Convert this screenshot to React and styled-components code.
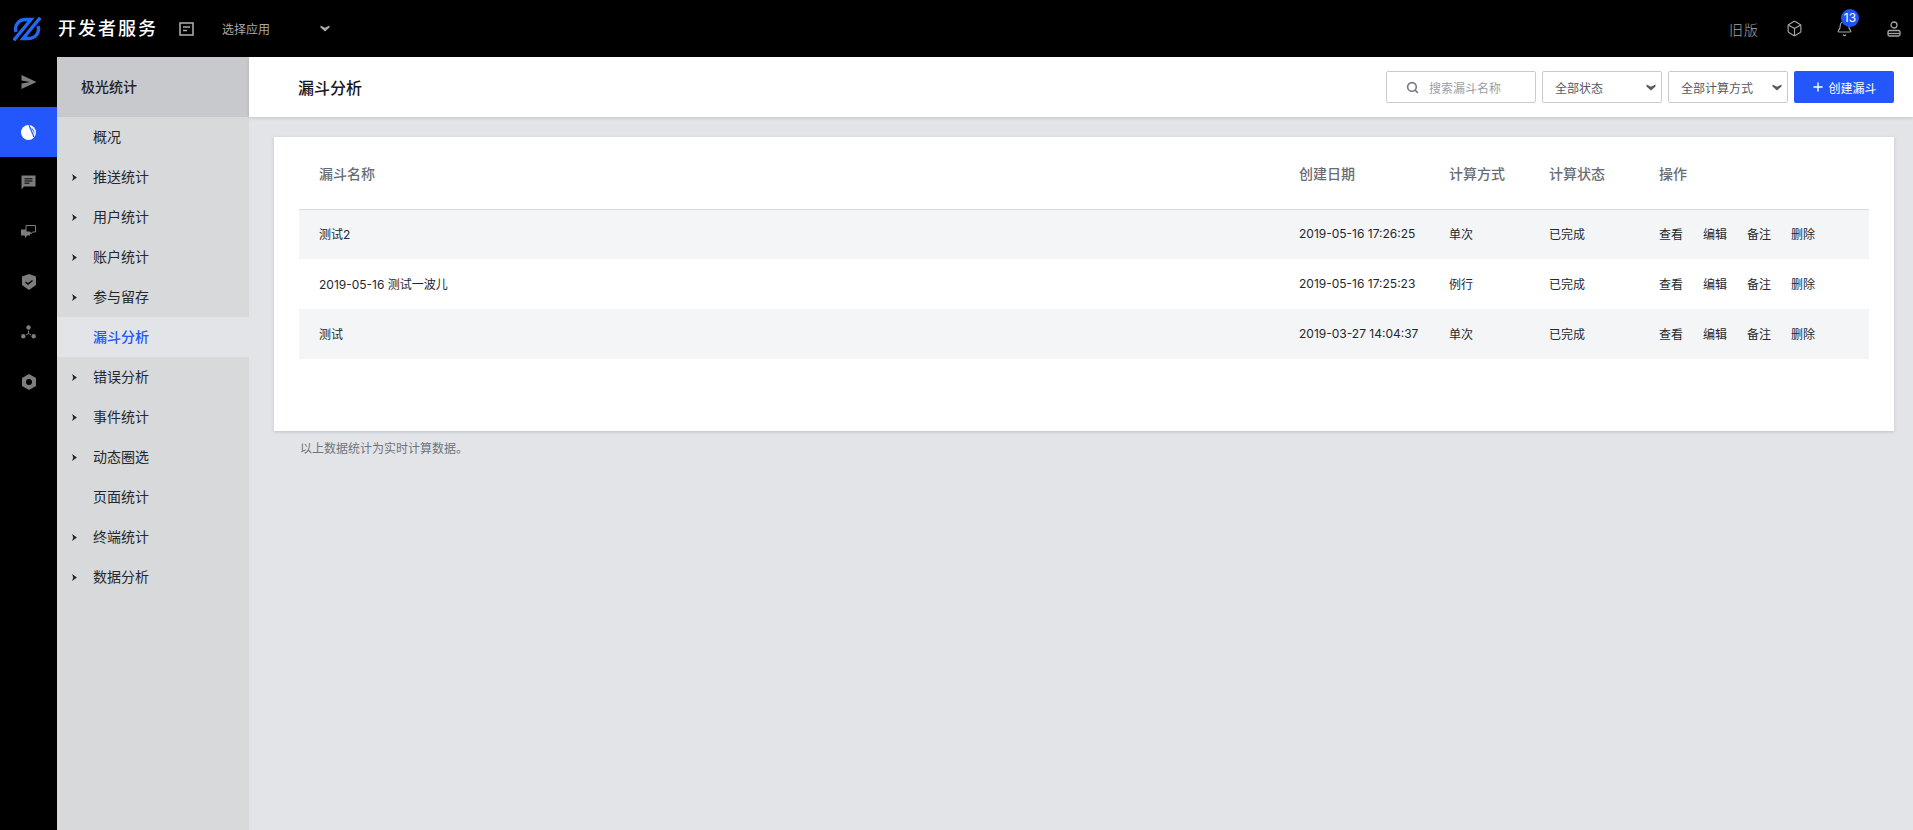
import React from "react";
import styled, { createGlobalStyle } from "styled-components";
import { Box, Bell, Search, Plus } from "lucide-react";

const GlobalStyle = createGlobalStyle`
  html, body {
    margin: 0;
    padding: 0;
    background: #e2e4e8;
    font-family: Inter, "Noto Sans CJK SC", sans-serif;
    -webkit-font-smoothing: antialiased;
  }
  * {
    box-sizing: border-box;
  }
`;

const Page = styled.div`
  display: flex;
  flex-direction: column;
  height: 830px;
  overflow: hidden;
`;

const TopBar = styled.header`
  display: flex;
  align-items: center;
  flex: 0 0 57px;
  background: #000;
  color: #fff;
`;

const LogoCell = styled.div`
  display: flex;
  align-items: center;
  width: 58px;
  padding-left: 13px;
`;

const Brand = styled.div`
  width: 121px;
  font-size: 18px;
  font-weight: 500;
  letter-spacing: 2px;
  line-height: 24px;
`;

const AppPicker = styled.div`
  display: flex;
  align-items: center;
  color: #a9a9a9;
  font-size: 12px;
  svg {
    display: block;
  }
`;

const AppName = styled.span`
  width: 98px;
  margin-left: 28px;
`;

const TopActions = styled.div`
  display: flex;
  align-items: center;
  margin-left: auto;
  padding-right: 10px;
  color: #a5a5a5;
`;

const OldVersion = styled.span`
  margin-right: 26px;
  font-size: 14px;
  font-weight: 300;
  letter-spacing: 1px;
`;

const TopIcon = styled.span`
  position: relative;
  display: flex;
  justify-content: center;
  width: 18px;
  margin-right: ${(props) => props.$gap || 0}px;
`;

const Badge = styled.span`
  position: absolute;
  top: -11px;
  left: 6px;
  width: 18px;
  height: 18px;
  border-radius: 50%;
  background: #2152f5;
  color: #fff;
  font-size: 12px;
  line-height: 18px;
  text-align: center;
`;

const Body = styled.div`
  display: flex;
  flex: 1;
  min-height: 0;
`;

const Rail = styled.nav`
  flex: 0 0 57px;
  background: #000;
`;

const RailItem = styled.div`
  display: flex;
  align-items: center;
  justify-content: center;
  height: 50px;
  background: ${(props) => (props.$active ? "#2457fb" : "transparent")};
  color: ${(props) => (props.$active ? "#fff" : "#7d7d7d")};
`;

const Sidebar = styled.aside`
  flex: 0 0 192px;
  background: #d8d9db;
`;

const SidebarTitle = styled.div`
  height: 60px;
  padding-left: 24px;
  background: #c8c9cc;
  color: #1e2229;
  font-size: 14px;
  font-weight: 500;
  line-height: 60px;
`;

const MenuItem = styled.div`
  display: flex;
  align-items: center;
  height: 40px;
  padding-bottom: 3px;
  background: ${(props) => (props.$active ? "#e2e4e8" : "transparent")};
  color: ${(props) => (props.$active ? "#2457fb" : "#24282e")};
  font-size: 14px;
  font-weight: ${(props) => (props.$active ? 500 : 400)};
`;

const CaretSlot = styled.span`
  display: flex;
  justify-content: flex-end;
  width: 36px;
  margin-top: 3px;
  padding-right: 16px;
`;

const Main = styled.main`
  flex: 1;
  min-width: 0;
`;

const PageHeader = styled.div`
  display: flex;
  align-items: center;
  height: 60px;
  padding: 0 19px 0 49px;
  background: #fff;
  box-shadow: 0 1px 3px rgba(30, 35, 45, 0.16);
`;

const PageTitle = styled.h1`
  margin: 0 auto 0 0;
  color: #14171c;
  font-size: 16px;
  font-weight: 500;
`;

const SearchBox = styled.div`
  display: flex;
  align-items: center;
  width: 150px;
  height: 32px;
  padding-left: 19px;
  border: 1px solid #c8ccd2;
  border-radius: 2px;
  color: #777c84;
  font-size: 12px;
`;

const Placeholder = styled.span`
  margin-left: 10px;
  color: #9a9ea6;
`;

const SelectBox = styled.div`
  display: flex;
  align-items: center;
  justify-content: space-between;
  width: ${(props) => props.$width}px;
  height: 32px;
  margin-left: ${(props) => props.$gap}px;
  padding: 0 5px 0 12px;
  border: 1px solid #c8ccd2;
  border-radius: 2px;
  color: #555a61;
  font-size: 12px;
`;

const CreateButton = styled.button`
  display: flex;
  align-items: center;
  justify-content: center;
  gap: 3px;
  width: 100px;
  height: 32px;
  margin-left: 6px;
  border: 0;
  border-radius: 2px;
  background: #2457fb;
  color: #fff;
  font-family: inherit;
  font-size: 12px;
`;

const Content = styled.div`
  padding: 20px 19px 0 25px;
`;

const Card = styled.section`
  height: 294px;
  padding: 0 25px;
  background: #fff;
  box-shadow: 0 1px 3px rgba(30, 35, 45, 0.18);
`;

const Row = styled.div`
  position: relative;
  z-index: ${(props) => (props.$head ? 1 : 0)};
  display: grid;
  grid-template-columns: 980px 150px 100px 110px 1fr;
  align-items: center;
  height: ${(props) => (props.$head ? "72px" : "50px")};
  padding-bottom: 1px;
  box-shadow: ${(props) => (props.$head ? "0 1px 0 #d8dade" : "none")};
  background: ${(props) => (props.$striped ? "#f4f5f7" : "transparent")};
  color: ${(props) => (props.$head ? "#686d75" : "#24282e")};
  font-size: ${(props) => (props.$head ? "14px" : "12px")};
  font-weight: ${(props) => (props.$head ? 500 : 400)};
`;

const Cell = styled.div`
  padding-left: 20px;
  white-space: nowrap;
`;

const Operations = styled(Cell)`
  display: flex;
  gap: 20px;
`;

const Note = styled.p`
  margin: 10px 0 0 26px;
  color: #6f747c;
  font-size: 12px;
  line-height: 16px;
`;

const LogoMark = () => (
  <svg width="28" height="24" viewBox="0 0 28 24" fill="none" stroke="#2468f2" strokeWidth="3.4">
    <path d="M0.800 23.300 18 2.500H13C5.500 2.500 1 8.500 3 15" />
    <path d="M27.200 0.700 10 21.500H15C22.500 21.500 27 15.500 25 9" />
  </svg>
);

const AppIcon = () => (
  <svg width="15" height="14" viewBox="0 0 15 14" fill="none" stroke="#a9a9a9" strokeWidth="1.6">
    <rect x="1" y="1" width="13" height="12" />
    <path d="M4 5h7M4 8.500h4" />
  </svg>
);

const ChevronDown = ({ color = "#a9a9a9" }) => (
  <svg width="10" height="7" viewBox="0 0 10 7" fill={color}>
    <path d="M0.500 0.500 5 2.800 9.500 0.500V2.500L5 6.500 0.500 2.500z" />
  </svg>
);

const UserIcon = () => (
  <svg width="14" height="16" viewBox="0 0 14 16" fill="none" stroke="#a5a5a5" strokeWidth="1.3">
    <circle cx="7" cy="4" r="3" />
    <rect x="1" y="9.500" width="12" height="5.500" rx="1.500" />
    <path d="M1 12.500h12" />
  </svg>
);

const SendIcon = () => (
  <svg width="16" height="14" viewBox="0 0 16 14" fill="currentColor">
    <path d="M0.500 0 15.500 7 0.500 14V8.500L9 7 0.500 5.500z" />
  </svg>
);

const PieIcon = () => (
  <svg width="15" height="15" viewBox="0 0 15 15">
    <circle cx="7.500" cy="7.500" r="7.500" fill="#fff" />
    <path d="M8 0.200 13 12" stroke="#2457fb" strokeWidth="1.200" />
    <path d="M9.800 2.200C12 3.500 13.600 6 13.600 8.800z" fill="#2457fb" />
  </svg>
);

const MessageIcon = () => (
  <svg width="15" height="15" viewBox="0 0 15 15">
    <path d="M0.500 0.500h14v11H3L0.500 14.500z" fill="currentColor" />
    <path d="M3.500 3.800h8M3.500 6h8M3.500 8.200h5" stroke="#000" strokeWidth="1" />
  </svg>
);

const ChatsIcon = () => (
  <svg width="15" height="14" viewBox="0 0 15 14">
    <path d="M0 4.500h9v6H6L4.500 13 3.500 10.500H0z" fill="currentColor" />
    <path d="M5 0.500h9.500v6.500H11.500L10 9 9 7H5z" fill="#000" stroke="currentColor" strokeWidth="1" />
  </svg>
);

const ShieldIcon = () => (
  <svg width="14" height="16" viewBox="0 0 14 16">
    <path d="M7 0 14 2.500V11L7 16 0 11V2.500z" fill="currentColor" />
    <path d="M3.500 8 6 10 10.500 6.500" fill="none" stroke="#000" strokeWidth="1.400" />
  </svg>
);

const NodesIcon = () => (
  <svg width="15" height="14" viewBox="0 0 15 14" fill="currentColor">
    <circle cx="7.500" cy="2.500" r="2.200" />
    <circle cx="2.300" cy="11.300" r="2.200" />
    <circle cx="12.700" cy="11.300" r="2.200" />
    <path d="M7.500 5.500V8.500M7.500 8.500 5 10M7.500 8.500 10 10" stroke="currentColor" strokeWidth="1" fill="none" />
  </svg>
);

const HexIcon = () => (
  <svg width="14" height="16" viewBox="0 0 14 16" fill="currentColor">
    <path
      fillRule="evenodd"
      d="M7 0 14 4V12L7 16 0 12V4zM7 5a3 3 0 1 0 0 6 3 3 0 0 0 0-6z"
    />
  </svg>
);

const Caret = () => (
  <svg width="5" height="7" viewBox="0 0 5 7" fill="#24282e">
    <path d="M0 0 5 3.500 0 7 1.200 3.500z" />
  </svg>
);

const railIcons = [SendIcon, PieIcon, MessageIcon, ChatsIcon, ShieldIcon, NodesIcon, HexIcon];

const menu = [
  { label: "概况" },
  { label: "推送统计", caret: true },
  { label: "用户统计", caret: true },
  { label: "账户统计", caret: true },
  { label: "参与留存", caret: true },
  { label: "漏斗分析", active: true },
  { label: "错误分析", caret: true },
  { label: "事件统计", caret: true },
  { label: "动态圈选", caret: true },
  { label: "页面统计" },
  { label: "终端统计", caret: true },
  { label: "数据分析", caret: true },
];

const funnels = [
  { name: "测试2", date: "2019-05-16 17:26:25", method: "单次", status: "已完成" },
  { name: "2019-05-16 测试一波儿", date: "2019-05-16 17:25:23", method: "例行", status: "已完成" },
  { name: "测试", date: "2019-03-27 14:04:37", method: "单次", status: "已完成" },
];

const operations = ["查看", "编辑", "备注", "删除"];

export default function App() {
  return (
    <Page>
      <GlobalStyle />
      <TopBar>
        <LogoCell>
          <LogoMark />
        </LogoCell>
        <Brand>开发者服务</Brand>
        <AppPicker>
          <AppIcon />
          <AppName>选择应用</AppName>
          <ChevronDown />
        </AppPicker>
        <TopActions>
          <OldVersion>旧版</OldVersion>
          <TopIcon $gap={32}>
            <Box size={17} strokeWidth={1.6} />
          </TopIcon>
          <TopIcon $gap={32}>
            <Bell size={17} strokeWidth={1.6} />
            <Badge>13</Badge>
          </TopIcon>
          <TopIcon>
            <UserIcon />
          </TopIcon>
        </TopActions>
      </TopBar>
      <Body>
        <Rail>
          {railIcons.map((Icon, index) => (
            <RailItem key={index} $active={index === 1}>
              <Icon />
            </RailItem>
          ))}
        </Rail>
        <Sidebar>
          <SidebarTitle>极光统计</SidebarTitle>
          {menu.map((item) => (
            <MenuItem key={item.label} $active={item.active}>
              <CaretSlot>{item.caret && <Caret />}</CaretSlot>
              {item.label}
            </MenuItem>
          ))}
        </Sidebar>
        <Main>
          <PageHeader>
            <PageTitle>漏斗分析</PageTitle>
            <SearchBox>
              <Search size={13} strokeWidth={3} />
              <Placeholder>搜索漏斗名称</Placeholder>
            </SearchBox>
            <SelectBox $width={120} $gap={6}>
              全部状态
              <ChevronDown color="#555a61" />
            </SelectBox>
            <SelectBox $width={120} $gap={6}>
              全部计算方式
              <ChevronDown color="#555a61" />
            </SelectBox>
            <CreateButton>
              <Plus size={14} strokeWidth={2.4} />
              创建漏斗
            </CreateButton>
          </PageHeader>
          <Content>
            <Card>
              <Row $head>
                <Cell>漏斗名称</Cell>
                <Cell>创建日期</Cell>
                <Cell>计算方式</Cell>
                <Cell>计算状态</Cell>
                <Cell>操作</Cell>
              </Row>
              {funnels.map((funnel, index) => (
                <Row key={funnel.name} $striped={index % 2 === 0}>
                  <Cell>{funnel.name}</Cell>
                  <Cell>{funnel.date}</Cell>
                  <Cell>{funnel.method}</Cell>
                  <Cell>{funnel.status}</Cell>
                  <Operations>
                    {operations.map((label) => (
                      <span key={label}>{label}</span>
                    ))}
                  </Operations>
                </Row>
              ))}
            </Card>
            <Note>以上数据统计为实时计算数据。</Note>
          </Content>
        </Main>
      </Body>
    </Page>
  );
}
